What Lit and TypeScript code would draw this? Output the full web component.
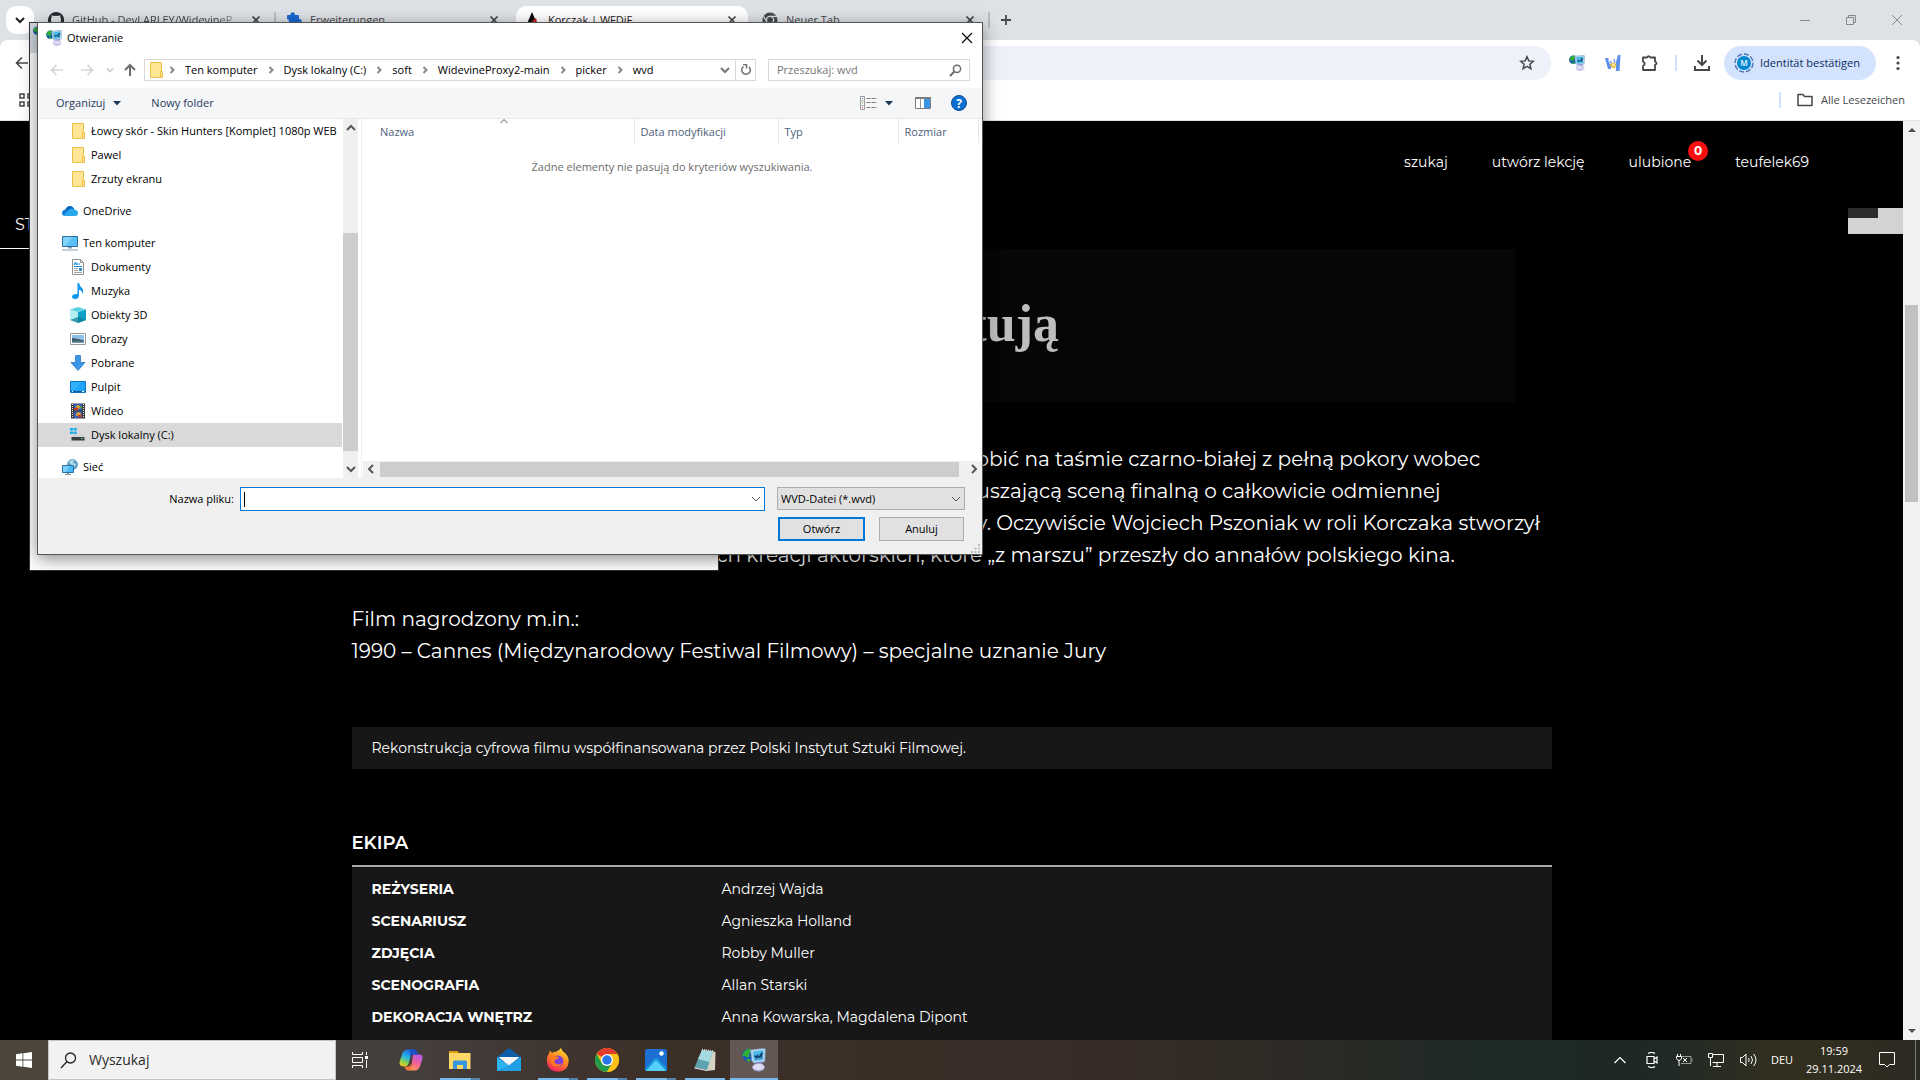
import { LitElement, html, css, nothing, TemplateResult } from "lit";
import { customElement } from "lit/decorators.js";
import { classMap } from "lit/directives/class-map.js";

/* ---------- shared icons ---------- */

const globeMonitor = (size: number) => html`
  <svg width=${size} height=${size} viewBox="0 0 24 24" aria-hidden="true">
    <circle cx="6.500" cy="7" r="6.300" fill="#1553b8" />
    <path d="M2 3.500Q5 .3 9 1L9.500 4 7 6 7.500 8.500 5 9.500 3 8 .5 8.500Q.4 5.500 2 3.500ZM4.500 10.500l3.500.5.5 2-2.500.4Q4.500 12.500 4.500 10.500Z" fill="#2fae3a" />
    <path d="M8.500 1.800 22.500.3 23.500 1.500 22.800 13.800 12 15.200 9.800 13Z" fill="#b4d3ea" stroke="#6f8fb2" stroke-width=".6" />
    <path d="M11 3.400 21.500 2.300 21 12 12 13Z" fill="#4cb8ea" />
    <path d="M12.500 7.500 14.500 10 15.500 7.500 17 9.500 20 4.500 19 10.500" fill="none" stroke="#123f6c" stroke-width="1.400" />
    <path d="M14 14.500 20.500 13.800 20 17.500H15Z" fill="#8486c8" />
    <ellipse cx="16.500" cy="19.200" rx="6" ry="3.800" fill="#dcdcf4" stroke="#9a9ac4" stroke-width=".6" />
    <path d="M12.500 21.500q4 2.500 8 0" stroke="#a9a6dc" fill="none" stroke-width="1.200" />
  </svg>`;

const folder = html`
  <svg width="16" height="16" viewBox="0 0 16 16" aria-hidden="true">
    <path d="M2.500.5h11v15h-11Z" fill="#ffe694" stroke="#e8c04a" />
    <path d="M12.500 9.500h2v6h-2Z" fill="#ffe694" stroke="#e8c04a" />
  </svg>`;

const chevronDown = (color: string, size = 10, width = 1) => html`
  <svg width=${size} height=${size} viewBox="0 0 10 10" aria-hidden="true">
    <path d="M1 3l4 4 4-4" fill="none" stroke=${color} stroke-width=${width} />
  </svg>`;

const treeIcons: Record<string, TemplateResult> = {
  folder,
  onedrive: html`<svg width="16" height="16" viewBox="0 0 16 16">
    <path d="M3 8Q4 3 8 3q3 0 4.500 3.500L8 11Z" fill="#0364b8" />
    <path d="M3.500 13Q0 13 0 10t3.500-3.500Q6 6.500 8 9l2 4Z" fill="#0f78d4" />
    <path d="M6 7.500Q9 4 12.500 6.500 16 7.500 16 10q0 3-3 3H3.500Q2 12.500 2 12Z" fill="#28a8ea" />
  </svg>`,
  computer: html`<svg width="16" height="16" viewBox="0 0 16 16">
    <path d="M.5 1.500h15v10H.5Z" fill="#5bc0f8" stroke="#2b6f9e" />
    <path d="M1 2h9L4 11H1Z" fill="#83d3fd" />
    <path d="M6 12h4v1.500H6ZM0 14.500h16v1H0Z" fill="#8aa0b2" />
  </svg>`,
  documents: html`<svg width="16" height="16" viewBox="0 0 16 16">
    <path d="M2.500.5h8l3 3v12h-11Z" fill="#fff" stroke="#8f8f8f" />
    <path d="M10.500.5v3h3" fill="none" stroke="#8f8f8f" />
    <path d="M4 6l1.500-3L7 6M4 7.500h8M4 5h6" stroke="#1b94dc" fill="none" />
    <path d="M4 9.500h4M4 11.500h4M4 13.500h8" stroke="#a0a0a0" />
    <path d="M9 9h3v3H9Z" fill="#3b8ec4" />
  </svg>`,
  music: html`<svg width="16" height="16" viewBox="0 0 16 16">
    <path d="M7.500 0H9q.5 3 3 5 2 2 .5 6-.3-3.500-3.500-4.500v6Q8.500 16 5 16q-3-.2-3-2.500Q2.500 10.500 7.500 11Z" fill="#0d96ee" />
  </svg>`,
  objects: html`<svg width="16" height="16" viewBox="0 0 16 16">
    <path d="M0 2.500 8 5v11l-8-3Z" fill="#b5eff2" />
    <path d="M16 2.500 8 5v11l8-3Z" fill="#0e9fc9" />
    <path d="M0 2.500 8 0l8 2.500L8 5Z" fill="#5ad2e2" />
    <path d="M0 13l8-3 8 3-8 3Z" fill="#0b7f96" opacity=".75" />
  </svg>`,
  pictures: html`<svg width="16" height="16" viewBox="0 0 16 16">
    <path d="M.5 2.500h15v11H.5Z" fill="#fff" stroke="#9a9a9a" />
    <path d="M2 4h12v8H2Z" fill="#8fc0ea" />
    <path d="M2 7q4 0 12 2.500V12H2Z" fill="#3b5f66" />
    <path d="M2 10.500h12V12H2Z" fill="#6f97b3" />
  </svg>`,
  downloads: html`<svg width="16" height="16" viewBox="0 0 16 16">
    <path d="M5.500.5h5v7h4.500l-7 8-7-8h4.500Z" fill="#3b95e6" stroke="#2a78c6" stroke-width=".8" />
  </svg>`,
  desktop: html`<svg width="16" height="16" viewBox="0 0 16 16">
    <path d="M.5 2.500h15v11H.5Z" fill="#1fa5fb" stroke="#1074bd" />
    <path d="M1 3h10L5 11H1Z" fill="#2fb0ff" />
    <path d="M1 12.500h14" stroke="#0a5c9c" /><path d="M2 12.500h1M12 12.500h2" stroke="#fff" />
  </svg>`,
  video: html`<svg width="16" height="16" viewBox="0 0 16 16">
    <path d="M1 .5h14v15H1Z" fill="#3a3a3a" />
    <path d="M2.500 1v14M13.500 1v14" stroke="#e8e8e8" stroke-dasharray="1 1" />
    <path d="M4 1h8v6.500H4ZM4 8.500h8V15H4Z" fill="#2f5fc0" />
    <path d="M5 3l4-1 2 3-3 1ZM5 12l3-3 3 1-1 4Z" fill="#e2a12a" />
    <path d="M4 5h4v2.500H4ZM8 12h4v2H8Z" fill="#c23a2a" />
    <path d="M9 4l3-1v3Z" fill="#5aa63a" />
  </svg>`,
  drive: html`<svg width="16" height="16" viewBox="0 0 16 16">
    <path d="M0 1h3v2.500H0ZM3.700 1h3v2.500h-3ZM0 4.500h3V7H0ZM3.700 4.500h3V7h-3Z" fill="#12aff0" />
    <path d="M3.500 7.500h9l2 2.500h-13Z" fill="#d2d2d2" />
    <path d="M1.500 10h13v3.500h-13Z" fill="#3a3f44" /><path d="M11 11.500h2" stroke="#3ade5c" />
  </svg>`,
  network: html`<svg width="16" height="16" viewBox="0 0 16 16">
    <circle cx="10.500" cy="5.500" r="5.400" fill="#5d9fc6" />
    <path d="M7 3q3-3 5-2l-1 3 3 1-2 4" fill="#b7dcec" />
    <path d="M.5 6.500h11v7H.5Z" fill="#4bb8f8" stroke="#2b6f9e" />
    <path d="M1 7h7l-4 6H1Z" fill="#7dd0fd" />
    <path d="M3 15.500h6M5 14.500h2" stroke="#8aa0b2" />
  </svg>`,
};

const reset = css`
  * { box-sizing: border-box; }
  button, input, select {
    font: inherit; color: inherit; margin: 0; padding: 0; border: 0;
    background: none; border-radius: 0; outline: 0; appearance: none;
  }
  a { color: inherit; text-decoration: none; }
  ul { list-style: none; margin: 0; padding: 0; }
  svg { display: block; flex: none; }
`;

/* ---------- browser chrome ---------- */

interface Tab { title: string; icon: TemplateResult; active?: boolean; sep?: boolean; }

const tabs: Tab[] = [
  {
    title: "GitHub - DevLARLEY/WidevineP",
    sep: true,
    icon: html`<svg width="16" height="16" viewBox="0 0 16 16"><path fill="#24292f" d="M8 0a8 8 0 0 0-2.500 15.600c.4.100.5-.2.5-.4v-1.400c-2.200.5-2.700-1-2.700-1-.4-1-.9-1.200-.9-1.200-.7-.5.100-.5.100-.5.800.100 1.200.800 1.200.800.700 1.200 1.900.900 2.300.700.100-.5.300-.9.500-1.100-1.800-.2-3.600-.9-3.600-4 0-.9.300-1.600.8-2.100-.1-.2-.4-1 .1-2.100 0 0 .7-.2 2.200.800a7.500 7.500 0 0 1 4 0c1.500-1 2.200-.8 2.200-.8.400 1.100.200 1.900.100 2.100.5.600.8 1.300.8 2.100 0 3.100-1.900 3.800-3.700 4 .3.300.6.800.6 1.500v2.200c0 .200.100.500.600.400A8 8 0 0 0 8 0Z"/></svg>`,
  },
  {
    title: "Erweiterungen",
    icon: html`<svg width="16" height="16" viewBox="0 0 16 16"><path fill="#1a67d2" d="M4.500 2.500a2.200 2.200 0 0 1 4.400 0V3H12q1 0 1 1v3h.5a2.200 2.200 0 0 1 0 4.400H13V14q0 1-1 1H9a2 2 0 0 0-4 0H2q-1 0-1-1v-3a2 2 0 0 0 0-4V4q0-1 1-1h2.500Z"/></svg>`,
  },
  {
    title: "Korczak | WFDiF",
    active: true,
    icon: html`<svg width="16" height="16" viewBox="0 0 16 16"><path d="M8 0l6 14H2Z" fill="#0b0b0b"/><path d="M8 9l4-3 2 8H9Z" fill="#c4211c"/></svg>`,
  },
  {
    title: "Neuer Tab",
    sep: true,
    icon: html`<svg width="16" height="16" viewBox="0 0 16 16"><circle cx="8" cy="8" r="7.500" fill="#45494e"/><path d="M8 4.300h7M4.800 9.900 1.500 4.200M11.200 9.900 7.800 15.500" stroke="#dee1e6" stroke-width="1.200"/><circle cx="8" cy="8" r="3.600" fill="#45494e" stroke="#dee1e6" stroke-width="1.400"/></svg>`,
  },
];

@customElement("browser-chrome")
class BrowserChrome extends LitElement {
  static styles = [reset, css`
    :host { display: block; font: 11px/16px "Segoe UI", "Open Sans", sans-serif; color: #1f2023; background: #dee1e6; white-space: nowrap; }
    .strip { height: 40px; display: flex; align-items: center; padding: 0 6px; }
    .search-tabs { width: 28px; height: 28px; border-radius: 10px; background: #fff; display: grid; place-items: center; margin-right: 6px; }
    .tabs { display: flex; align-self: stretch; padding-top: 6px; }
    .tab { width: 232px; margin-right: 6px; display: flex; align-items: center; gap: 8px; padding: 0 8px 6px; color: #45474a; border-radius: 10px 10px 0 0; position: relative; }
    .tab.active { background: #fff; color: #1f2023; }
    .tab.sep::after { content: ""; position: absolute; right: -4px; top: 6px; width: 2px; height: 16px; background: #b9bcc2; }
    .title { flex: 1; }
    .tab:first-child .title { mask-image: linear-gradient(90deg, #000 145px, transparent 172px); }
    .add { margin-left: 6px; }
    .window { margin-left: auto; display: flex; gap: 30px; padding-right: 9px; }
    .toolbar { background: #fff; border-radius: 8px 8px 0 0; height: 46px; display: flex; align-items: center; padding: 0 14px 0 14px; }
    .omnibox { flex: 1; margin-left: 86px; height: 34px; border-radius: 17px; background: #edf1fa; display: flex; align-items: center; padding-right: 16px; }
    .omnibox input { flex: 1; height: 100%; }
    .ext { display: flex; align-items: center; gap: 20px; margin-left: 18px; }
    .bar { width: 2px; height: 16px; background: #d3e3fd; }
    .ext .bar { margin: 0 -4px; }
    .identity { width: 152px; height: 34px; border-radius: 17px; background: #d3e3fd; color: #0a2a5e; display: flex; align-items: center; gap: 6px; padding: 0 12px 0 10px; margin: 0 14px 0 13px; }
    .bookmarks { background: #fff; height: 35px; border-bottom: 1px solid #e1e3e1; display: flex; align-items: center; padding: 0 15px 6px 18px; }
    .all { margin-left: auto; display: flex; align-items: center; gap: 8px; color: #45474a; }
    .all svg { margin-left: 8px; }
  `];

  render() {
    return html`
      <div class="strip">
        <button class="search-tabs" aria-label="Tabs durchsuchen">${chevronDown("#1f2023", 10, 2)}</button>
        <div class="tabs" role="tablist">
          ${tabs.map((t) => html`
            <div class=${classMap({ tab: true, active: !!t.active, sep: !!t.sep })} role="tab">
              ${t.icon}<span class="title">${t.title}</span>
              <button aria-label="Schließen">
                <svg width="16" height="16" viewBox="0 0 16 16"><path d="M4.500 4.500l7 7M11.500 4.500l-7 7" stroke="#3c3f43" stroke-width="1.600"/></svg>
              </button>
            </div>`)}
        </div>
        <button class="add" aria-label="Neuer Tab">
          <svg width="16" height="16" viewBox="0 0 16 16"><path d="M8 3v10M3 8h10" stroke="#45474a" stroke-width="1.800"/></svg>
        </button>
        <div class="window">
          <button aria-label="Minimieren"><svg width="16" height="16" viewBox="0 0 16 16"><path d="M3 8.500h10" stroke="#86898d"/></svg></button>
          <button aria-label="Verkleinern"><svg width="16" height="16" viewBox="0 0 16 16"><path d="M3.500 5.500h7v7h-7ZM5.500 5.500v-2h7v7h-2" fill="none" stroke="#86898d"/></svg></button>
          <button aria-label="Fenster schließen"><svg width="16" height="16" viewBox="0 0 16 16"><path d="M3 3l10 10M13 3L3 13" stroke="#86898d"/></svg></button>
        </div>
      </div>
      <div class="toolbar">
        <button aria-label="Zurück"><svg width="16" height="16" viewBox="0 0 16 16"><path d="M14 8H3M8 2.500 2.500 8 8 13.500" fill="none" stroke="#45474a" stroke-width="1.600"/></svg></button>
        <div class="omnibox">
          <input type="text" aria-label="Adresse" />
          <button aria-label="Lesezeichen"><svg width="16" height="16" viewBox="0 0 16 16"><path d="M8 1.800l1.800 4.100 4.500.4-3.400 3 1 4.400L8 11.400l-3.900 2.300 1-4.400-3.400-3 4.500-.4Z" fill="none" stroke="#45474a" stroke-width="1.500"/></svg></button>
        </div>
        <div class="ext">
          <button aria-label="WidevineProxy2">${globeMonitor(16)}</button>
          <button aria-label="Widevine"><svg width="16" height="16" viewBox="0 0 16 16"><path d="M0 3h3.500v3L6 11v3H3ZM15.500 0H13l-2 7v9h3.500Z" fill="#5b8fee"/><path d="M5 6l2 3M9 4l1 4" stroke="#7aa5f5" stroke-width="1.500"/><path d="M4.500 9.500 8 7.500 11.500 9l-1.500 4H7Z" fill="#f2bb44"/><circle cx="8.500" cy="10" r="1.200" fill="#fff3c4"/></svg></button>
          <button aria-label="Erweiterungen"><svg width="18" height="18" viewBox="0 0 18 18"><path d="M2 3.500h4q1.500-2.500 3.500 0H14v4q3 1.500 0 3.500V16H2v-4q3.500-2.200 0-4.500Z" fill="none" stroke="#45474a" stroke-width="1.800" stroke-linejoin="round"/></svg></button>
          <span class="bar"></span>
          <button aria-label="Downloads"><svg width="18" height="18" viewBox="0 0 18 18"><path d="M9 1v9M4.500 6.500 9 11l4.500-4.500M2 12v4h14v-4" fill="none" stroke="#45474a" stroke-width="2"/></svg></button>
        </div>
        <button class="identity">
          <svg width="20" height="20" viewBox="0 0 20 20"><circle cx="10" cy="10" r="9" fill="none" stroke="#4a74b4" stroke-width="1.400" stroke-dasharray="5 2"/><circle cx="10" cy="10" r="7" fill="#0288d1"/><text x="10" y="13" text-anchor="middle" font-size="8" font-weight="700" fill="#cfeafa" font-family="Open Sans, sans-serif">M</text></svg>
          Identität bestätigen
        </button>
        <button aria-label="Menü"><svg width="16" height="16" viewBox="0 0 16 16"><g fill="#45474a"><circle cx="8" cy="2.500" r="1.600"/><circle cx="8" cy="8" r="1.600"/><circle cx="8" cy="13.500" r="1.600"/></g></svg></button>
      </div>
      <div class="bookmarks">
        <button aria-label="Apps"><svg width="16" height="16" viewBox="0 0 16 16"><path d="M2 2h4v4H2ZM10 2h4v4h-4ZM2 10h4v4H2ZM10 10h4v4h-4Z" fill="none" stroke="#45474a" stroke-width="1.500"/></svg></button>
        <div class="all"><span class="bar"></span>
          <svg width="16" height="16" viewBox="0 0 16 16"><path d="M1 2.500h5l1.500 2H15v9H1Z" fill="none" stroke="#45474a" stroke-width="1.500" stroke-linejoin="round"/></svg>
          <a href="#">Alle Lesezeichen</a></div>
      </div>`;
  }
}

/* ---------- film page ---------- */

const crew = [
  ["REŻYSERIA", "Andrzej Wajda"],
  ["SCENARIUSZ", "Agnieszka Holland"],
  ["ZDJĘCIA", "Robby Muller"],
  ["SCENOGRAFIA", "Allan Starski"],
  ["DEKORACJA WNĘTRZ", "Anna Kowarska, Magdalena Dipont"],
];

@customElement("film-page")
class FilmPage extends LitElement {
  static styles = [reset, css`
    :host { display: flex; min-height: 0; overflow: hidden; background: #000; color: #fff; font: 14px/32px Montserrat, "Inter", sans-serif; white-space: nowrap; }
    .page { flex: 1; min-width: 0; overflow: hidden; }
    .nav { height: 82px; display: flex; justify-content: flex-end; align-items: center; gap: 44px; padding-right: 94px; }
    .fav { position: relative; }
    .badge { position: absolute; left: 100%; bottom: 17px; margin-left: -3px; width: 20px; height: 20px; border-radius: 50%; background: #f81010; font-weight: 700; font-size: 12px; line-height: 20px; text-align: center; }
    .sub { height: 46px; display: flex; justify-content: space-between; }
    .section { width: 352px; padding: 6px 0 0 15px; border-bottom: 1px solid #fff; font-size: 16px; }
    .widget { width: 55px; height: 26px; margin-top: 5px; background: #d3d3d3; }
    .widget i { display: block; width: 30px; height: 10px; background: #2c2c2c; }
    .content { max-width: 1200px; margin: 0 auto; }
    .still { width: 97%; height: 153px; background: #060606; color: #bdbdbd; display: flex; align-items: center; font: 700 52px/60px "Liberation Serif", serif; margin-bottom: 41px; }
    .still span { margin-left: 618px; padding-bottom: 4px; }
    .text { font-size: 20px; margin: 0 0 32px; }
    .text span { display: block; padding-left: 625px; }
    .text .long { padding-left: 365px; }
    .note { margin: 60px 0 62px; padding: 5px 20px; background: #171717; }
    h2 { font-size: 18px; line-height: 24px; font-weight: 600; margin: 0; padding-bottom: 10px; border-bottom: 2px solid #aaa; }
    .crew { background: #171717; padding: 6px 20px 32px; }
    table { border-collapse: collapse; width: 100%; }
    th, td { padding: 0; height: 32px; text-align: left; font-weight: 400; }
    th { width: 350px; font-weight: 700; }
    .scroll { width: 17px; background: #f1f1f1; display: flex; flex-direction: column; align-items: center; padding: 5px 0; }
    .thumb { width: 13px; height: 197px; margin: 171px 0 auto; background: #c1c1c1; }
  `];

  render() {
    return html`
      <main class="page">
        <nav class="nav">
          <a href="#">szukaj</a><a href="#">utwórz lekcję</a>
          <a class="fav" href="#">ulubione<span class="badge">0</span></a>
          <a href="#">teufelek69</a>
        </nav>
        <div class="sub"><div class="section">ST</div><div class="widget"><i></i></div></div>
        <div class="content">
          <div class="still"><span>tują</span></div>
          <p class="text">
            <span>obić na taśmie czarno-białej z pełną pokory wobec</span>
            <span>uszającą sceną finalną o całkowicie odmiennej</span>
            <span>y. Oczywiście Wojciech Pszoniak w roli Korczaka stworzył</span>
            <span class="long">ch kreacji aktorskich, które „z marszu” przeszły do annałów polskiego kina.</span>
          </p>
          <p class="text">Film nagrodzony m.in.:<br />1990 – Cannes (Międzynarodowy Festiwal Filmowy) – specjalne uznanie Jury</p>
          <div class="note">Rekonstrukcja cyfrowa filmu współfinansowana przez Polski Instytut Sztuki Filmowej.</div>
          <h2>EKIPA</h2>
          <div class="crew">
            <table>${crew.map(([role, name]) => html`<tr><th scope="row">${role}</th><td>${name}</td></tr>`)}</table>
          </div>
        </div>
      </main>
      <div class="scroll">
        <svg width="8" height="8" viewBox="0 0 8 8"><path d="M0 6l4-4 4 4Z" fill="#505050"/></svg>
        <div class="thumb"></div>
        <svg width="8" height="8" viewBox="0 0 8 8"><path d="M0 2l4 4 4-4Z" fill="#505050"/></svg>
      </div>`;
  }
}

/* ---------- file dialog ---------- */

interface Node { label: string; icon: string; child?: boolean; gap?: boolean; selected?: boolean; }

const tree: Node[] = [
  { label: "Łowcy skór - Skin Hunters [Komplet] 1080p WEB", icon: "folder", child: true },
  { label: "Pawel", icon: "folder", child: true },
  { label: "Zrzuty ekranu", icon: "folder", child: true },
  { label: "OneDrive", icon: "onedrive", gap: true },
  { label: "Ten komputer", icon: "computer", gap: true },
  { label: "Dokumenty", icon: "documents", child: true },
  { label: "Muzyka", icon: "music", child: true },
  { label: "Obiekty 3D", icon: "objects", child: true },
  { label: "Obrazy", icon: "pictures", child: true },
  { label: "Pobrane", icon: "downloads", child: true },
  { label: "Pulpit", icon: "desktop", child: true },
  { label: "Wideo", icon: "video", child: true },
  { label: "Dysk lokalny (C:)", icon: "drive", child: true, selected: true },
  { label: "Sieć", icon: "network", gap: true },
];

const crumbs = ["Ten komputer", "Dysk lokalny (C:)", "soft", "WidevineProxy2-main", "picker", "wvd"];

const arrow = (d: string, color = "#555") => html`
  <svg width="10" height="10" viewBox="0 0 10 10" aria-hidden="true"><path d=${d} fill="none" stroke=${color} stroke-width="2"/></svg>`;

@customElement("file-dialog")
class FileDialog extends LitElement {
  static styles = [reset, css`
    :host { display: flex; flex-direction: column; background: #fff; border: 1px solid #555; color: #000; font: 11px/16px "Segoe UI", "Open Sans", sans-serif; white-space: nowrap; box-shadow: 0 4px 16px rgba(0, 0, 0, .45); }
    .caption { display: flex; align-items: center; height: 30px; padding: 0 7px 1px 8px; gap: 5px; }
    .caption button { margin-left: auto; }
    .path { display: flex; align-items: center; height: 35px; padding: 0 12px 1px 11px; }
    .arrows { display: flex; align-items: center; gap: 14px; margin-right: 6px; }
    .arrows button { width: 16px; display: grid; place-items: center; }
    .arrows .recent { width: 5px; margin: 0 -3px; }
    .address { flex: 1; height: 22px; border: 1px solid #d9d9d9; display: flex; align-items: center; padding-left: 3px; }
    .address ol { list-style: none; margin: 0 auto 0 0; padding: 0; display: flex; }
    .address li { display: flex; align-items: center; }
    .address li svg { margin: 0 8px; }
    .address li:first-child svg { margin-left: 3px; }
    .address .open { width: 20px; display: grid; place-items: center; }
    .address .reload { width: 20px; height: 20px; border-left: 1px solid #d9d9d9; display: grid; place-items: center; }
    .find { width: 202px; height: 22px; margin-left: 12px; border: 1px solid #d9d9d9; display: flex; align-items: center; padding: 0 7px 0 8px; }
    .find input { flex: 1; min-width: 0; }
    .find input::placeholder { color: #767676; opacity: 1; }
    .tools { height: 31px; background: #f5f6f7; border-bottom: 1px solid #e7e8ea; display: flex; align-items: center; padding: 0 15px 0 18px; color: #1e395b; }
    .tools button { display: flex; align-items: center; gap: 8px; }
    .tools .new { margin-left: 30px; margin-right: auto; }
    .tools .view { margin-right: 22px; }
    .tools .preview { margin-right: 20px; }
    .body { flex: 1; min-height: 0; display: flex; }
    .tree { width: 304px; overflow: hidden; }
    .node { display: flex; align-items: center; height: 24px; gap: 5px; padding-left: 24px; width: 100%; }
    .node.child { padding-left: 32px; }
    .gap { margin-top: 8px; }
    .node.selected { background: #d9d9d9; }
    .vbar { width: 15px; margin-left: 1px; background: #f0f0f0; display: flex; flex-direction: column; align-items: center; padding: 4px 0; }
    .vthumb { width: 15px; height: 218px; margin: auto 0 13px; background: #cdcdcd; }
    .files { flex: 1; display: flex; flex-direction: column; margin-left: 3px; border-left: 1px solid #f0f0f0; position: relative; }
    .sort { position: absolute; left: 138px; top: -2px; }
    table { border-collapse: collapse; width: 616px; table-layout: fixed; color: #4c607a; }
    th { font-weight: 400; text-align: left; height: 24px; padding: 2px 0 0 6px; border-right: 1px solid #e5e5e5; }
    th:first-child { padding-left: 18px; width: 272px; }
    .c2 { width: 144px; } .c3 { width: 120px; } .c4 { width: 80px; }
    .empty { text-align: center; color: #6d6d6d; margin: 16px 0 auto; }
    .hbar { height: 17px; margin-left: 1px; background: #f0f0f0; display: flex; align-items: center; padding: 0 3px 1px; }
    .hthumb { flex: 1; height: 15px; margin: 0 10px 0 4px; background: #cdcdcd; }
    .footer { background: #f0f0f0; height: 76px; display: grid; grid-template-columns: 1fr 188px; column-gap: 12px; row-gap: 6px; align-content: start; padding: 9px 17px 0 129px; position: relative; }
    .name { display: flex; align-items: center; gap: 6px; }
    .name label { width: 67px; text-align: right; }
    .combo { flex: 1; height: 24px; background: #fff; border: 1px solid #0078d7; display: flex; align-items: center; padding-right: 3px; }
    .combo input { flex: 1; height: 22px; background: linear-gradient(#000, #000) 3px 4px / 1px 15px no-repeat; }
    .type { position: relative; }
    .type select { width: 100%; height: 23px; padding-left: 3px; background: #e1e1e1; border: 1px solid #adadad; }
    .type svg { position: absolute; right: 4px; top: 7px; pointer-events: none; }
    .buttons { grid-column: 2; display: flex; gap: 14px; padding: 0 1px; }
    .buttons button { flex: 1; height: 24px; background: #e1e1e1; border: 1px solid #adadad; }
    .buttons .ok { border: 2px solid #0078d7; }
    .grip { position: absolute; right: 2px; bottom: 1px; }
  `];

  render() {
    return html`
      <div class="caption">${globeMonitor(16)}<span>Otwieranie</span>
        <button aria-label="Zamknij"><svg width="16" height="16" viewBox="0 0 16 16"><path d="M3 3l10 10M13 3L3 13" stroke="#000" stroke-width="1.100"/></svg></button>
      </div>
      <div class="path">
        <div class="arrows">
          <button aria-label="Wstecz"><svg width="14" height="14" viewBox="0 0 14 14"><path d="M13 7H2M6.500 2 1.500 7l5 5" fill="none" stroke="#d4d4d4" stroke-width="1.500"/></svg></button>
          <button aria-label="Dalej"><svg width="14" height="14" viewBox="0 0 14 14"><path d="M1 7h11M7.500 2l5 5-5 5" fill="none" stroke="#d4d4d4" stroke-width="1.500"/></svg></button>
          <button class="recent" aria-label="Ostatnie">${chevronDown("#d0d0d0", 8, 2)}</button>
          <button aria-label="W górę"><svg width="14" height="14" viewBox="0 0 14 14"><path d="M7 13V2M2 7l5-5 5 5" fill="none" stroke="#6d6d6d" stroke-width="2"/></svg></button>
        </div>
        <div class="address">${folder}
          <ol>${crumbs.map((c) => html`<li>${arrow("M3.500 2 6.500 5 3.500 8", "#888")}<a href="#">${c}</a></li>`)}</ol>
          <button class="open" aria-label="Poprzednie lokalizacje">${chevronDown("#777", 10, 2)}</button>
          <button class="reload" aria-label="Odśwież"><svg width="12" height="12" viewBox="0 0 12 12"><path d="M9 2.800A4.300 4.300 0 1 1 3.500 2.500M3 .5h3.500V4.500" fill="none" stroke="#6d6d6d" stroke-width="1.500"/></svg></button>
        </div>
        <div class="find"><input type="text" aria-label="Przeszukaj" placeholder="Przeszukaj: wvd" />
          <svg width="13" height="13" viewBox="0 0 13 13"><circle cx="8" cy="4.800" r="3.600" fill="none" stroke="#6d6d6d" stroke-width="1.500"/><path d="M5.300 7.500 1 12" stroke="#6d6d6d" stroke-width="2"/></svg>
        </div>
      </div>
      <div class="tools">
        <button>Organizuj <svg width="8" height="5" viewBox="0 0 8 5"><path d="M0 0h8L4 4.500Z" fill="#1e395b"/></svg></button>
        <button class="new">Nowy folder</button>
        <button class="view" aria-label="Widok">
          <svg width="17" height="14" viewBox="0 0 17 14"><path d="M.5.5h4v13h-4Z" fill="#fff" stroke="#9a9a9a"/><path d="M.5 5h4M.5 9.500h4" stroke="#b0b0b0"/><path d="M2 2.500h1" stroke="#3a62c4"/><path d="M2 7h1" stroke="#2a9a4a"/><path d="M2 11.500h1" stroke="#c43a2a"/><path d="M6.500 2.500H17M6.500 6.500H17M6.500 11.500H17" stroke="#7a7a7a" stroke-dasharray="4 1"/></svg>
          <svg width="8" height="5" viewBox="0 0 8 5"><path d="M0 0h8L4 4.500Z" fill="#1e395b"/></svg>
        </button>
        <button class="preview" aria-label="Okienko podglądu"><svg width="16" height="12" viewBox="0 0 16 12"><path d="M.5.5h15v11H.5Z" fill="#fff" stroke="#7d7d7d"/><path d="M0 1h16" stroke="#7d7d7d" stroke-width="2"/><path d="M5.500 2v9" stroke="#9a9a9a"/><path d="M9 2h6v9H9Z" fill="#3a96e4"/></svg></button>
        <button aria-label="Pomoc"><svg width="16" height="16" viewBox="0 0 16 16"><circle cx="8" cy="8" r="7.500" fill="#0a6fd0" stroke="#0a4c92"/><text x="8" y="12.500" text-anchor="middle" font-size="12" font-weight="700" fill="#fff" font-family="Open Sans, sans-serif">?</text></svg></button>
      </div>
      <div class="body">
        <ul class="tree">
          ${tree.map((n) => html`<li class=${n.gap ? "gap" : nothing}>
            <button class=${classMap({ node: true, child: !!n.child, selected: !!n.selected })}>${treeIcons[n.icon]}<span>${n.label}</span></button></li>`)}
        </ul>
        <div class="vbar">${arrow("M1 7l4-4 4 4")}<div class="vthumb"></div>${arrow("M1 3l4 4 4-4")}</div>
        <div class="files">
          <svg class="sort" width="8" height="8" viewBox="0 0 8 8"><path d="M.5 6 4 2.500 7.500 6" fill="none" stroke="#555"/></svg>
          <table><thead><tr><th scope="col">Nazwa</th><th class="c2" scope="col">Data modyfikacji</th><th class="c3" scope="col">Typ</th><th class="c4" scope="col">Rozmiar</th></tr></thead></table>
          <p class="empty">Żadne elementy nie pasują do kryteriów wyszukiwania.</p>
          <div class="hbar">${arrow("M7 1 3 5l4 4")}<div class="hthumb"></div>${arrow("M3 1l4 4-4 4")}</div>
        </div>
      </div>
      <div class="footer">
        <div class="name"><label for="file">Nazwa pliku:</label>
          <div class="combo"><input id="file" type="text" /><button aria-label="Historia">${chevronDown("#555")}</button></div></div>
        <div class="type"><select aria-label="Typ pliku"><option>WVD-Datei (*.wvd)</option></select>${chevronDown("#555")}</div>
        <div class="buttons"><button class="ok">Otwórz</button><button>Anuluj</button></div>
        <svg class="grip" width="9" height="9" viewBox="0 0 9 9"><path d="M7 0h2v2H7ZM7 3.500h2v2H7ZM3.500 3.500h2v2h-2ZM7 7h2v2H7ZM3.500 7h2v2h-2ZM0 7h2v2H0Z" fill="#bcbcbc"/></svg>
      </div>`;
  }
}

/* ---------- taskbar ---------- */

interface App { name: string; icon: TemplateResult; state?: "many" | "one" | "active"; }

const apps: App[] = [
  { name: "Copilot", icon: html`<svg width="24" height="24" viewBox="0 0 24 24">
      <defs>
        <linearGradient id="ca" x1=".6" y1="0" x2=".2" y2="1"><stop offset="0" stop-color="#1e63e0"/><stop offset=".45" stop-color="#25b6e6"/><stop offset=".75" stop-color="#8fd14a"/><stop offset="1" stop-color="#f5c52c"/></linearGradient>
        <linearGradient id="cb" x1=".7" y1="0" x2=".3" y2="1"><stop offset="0" stop-color="#b45be8"/><stop offset=".5" stop-color="#f0609c"/><stop offset="1" stop-color="#ff9a4a"/></linearGradient>
      </defs>
      <path d="M14 6.500h6q4 0 3.500 4L21.500 17q-1.500 5.500-6 5.500H8.500q3-.5 4-4.500Z" fill="url(#cb)"/>
      <path d="M9 1.500h7.500q-3 .5-4.500 5L9.500 16q-1 2.500-4 2.500Q0 18.500.5 14L3 6.500Q4.500 1.500 9 1.500Z" fill="url(#ca)"/>
      <path d="M11 1.500h4.500q2.500 0 3.200 5H14q-1.500 0-2.500 2Z" fill="#1c4fc4"/>
      <path d="M5.500 18.500h3.500q2 0 3-3l.5 3q-1 4-3.500 4-2.500 0-3.500-4Z" fill="#f0733a"/>
    </svg>` },
  { name: "Eksplorator", state: "many", icon: html`<svg width="24" height="24" viewBox="0 0 24 24">
      <path d="M1 3h8.500l2 2.500H1Z" fill="#e0a010"/><path d="M1 5h21.500v16H1Z" fill="#ffd866"/>
      <path d="M5 21v-7q0-1.500 1.500-1.500h11Q19 12.500 19 14v7h-4v-4H9v4Z" fill="#3a96dc"/></svg>` },
  { name: "Poczta", icon: html`<svg width="24" height="24" viewBox="0 0 24 24">
      <path d="M0 9 12 0l12 9v3H0Z" fill="#0f5ea8"/><path d="M1.500 9h21L12 18Z" fill="#f4f8fc"/>
      <path d="M0 9l12 8.500L24 9v14H0Z" fill="#2bb3f2"/><path d="M24 9v14H0l12-6Z" fill="#1a92e0" opacity=".6"/></svg>` },
  { name: "Firefox", state: "many", icon: html`<svg width="24" height="24" viewBox="0 0 24 24">
      <defs><linearGradient id="ff" x1=".8" y1="0" x2=".3" y2="1"><stop offset="0" stop-color="#ffe83a"/><stop offset=".45" stop-color="#ff8a1e"/><stop offset="1" stop-color="#f5205e"/></linearGradient></defs>
      <path d="M15 0q1 3.500 4 5 4 4 3.700 8.500Q22 23.500 12 23.800 1 23 .8 12.500.8 8 3 5.500l1-3 2 2.500q2-1.500 4-1.200Q13 3 15 0Z" fill="url(#ff)"/>
      <circle cx="12" cy="13" r="5.400" fill="#7b3fd8"/>
      <path d="M4 7.500q4-.5 6 1l3 .500q-.5 2-3.500 2.500-2 2 0 4 3 2 6-.5-1 4-5.500 3.500-5-.5-6-6Z" fill="#ff7a1e"/></svg>` },
  { name: "Chrome", state: "many", icon: html`<svg width="24" height="24" viewBox="0 0 24 24">
      <circle cx="12" cy="12" r="12" fill="#fbc116"/>
      <path d="M12 12 1.600 6A12 12 0 0 1 22.400 6Z" fill="#e33b2e"/><path d="M1.600 6A12 12 0 0 0 12 24l5.200-9H6.800Z" fill="#229a49"/>
      <path d="M12 6h10.400a12 12 0 0 1 0 12A12 12 0 0 1 12 24l5.200-9Z" fill="#fbc116"/>
      <circle cx="12" cy="12" r="6" fill="#fff"/><circle cx="12" cy="12" r="4.700" fill="#2a75e8"/></svg>` },
  { name: "Zdjęcia", state: "many", icon: html`<svg width="24" height="24" viewBox="0 0 24 24">
      <rect x="1" y="1" width="22" height="22" rx="2" fill="#1c6fd0"/>
      <path d="M1 21 10 11q2-2 4 0l9 9v1q0 2-2 2H3q-2 0-2-2Z" fill="#1598e0"/>
      <path d="M2 23 10.500 13.500q1.500-1.500 3 0L22 23Z" fill="#56d0fa"/><circle cx="17.500" cy="5.500" r="2.200" fill="#fff"/></svg>` },
  { name: "Notatnik", state: "one", icon: html`<svg width="24" height="24" viewBox="0 0 24 24">
      <path d="M19 3 22.500 4 22 22 13 23Z" fill="#d8d4c4"/><path d="M9 2 20 3.500 14 22 1.500 19.500Z" fill="#5fa3b0"/>
      <path d="M9 2 20 3.500 16.500 14 5 11Z" fill="#a5dbe0"/><path d="M1.500 19.500 14 22v1L1.500 20.500Z" fill="#f2f2f2"/>
      <path d="M9 1.500 20 3" stroke="#e8e8e8" stroke-width="1.500" stroke-dasharray="1 1"/></svg>` },
  { name: "Otwieranie", state: "active", icon: globeMonitor(24) },
];

@customElement("task-bar")
class TaskBar extends LitElement {
  static styles = [reset, css`
    :host { display: flex; align-items: stretch; height: 40px; color: #fff; font: 11px/16px "Segoe UI", "Open Sans", sans-serif; white-space: nowrap;
      background: linear-gradient(90deg, #4c453a 0, #454040 12%, #443e3c 22%, #3c2f28 34%, #3a2c26 55%, #2c2a25 68%, #1d2a26 78%, #1e2826 86%, #33301f 93%, #2b2a22 100%); }
    .start { width: 48px; display: grid; place-items: center; }
    .search { width: 288px; background: #f2f2f2; border: 1px solid #c4c4c4; display: flex; align-items: center; gap: 12px; padding-left: 11px; }
    .search input { flex: 1; min-width: 0; height: 24px; line-height: 24px; font-size: 14px; color: #2b2b2b; }
    .search input::placeholder { color: #2b2b2b; opacity: 1; }
    .view { width: 48px; display: grid; place-items: center; margin-right: 3px; }
    .apps { display: flex; gap: 1px; margin-right: auto; }
    .app { width: 48px; display: grid; place-items: center; position: relative; }
    .app.on::after { content: ""; position: absolute; left: 4px; right: 4px; bottom: 0; height: 2px; background: #76b9ed; }
    .app.many::after { background: linear-gradient(90deg, #76b9ed 31px, #3f5e78 31px, #5584aa 32px); }
    .app.active { background: rgba(255, 255, 255, .2); }
    .app.active::after { left: 0; right: 0; }
    .tray { display: flex; align-items: center; gap: 14px; }
    .tray button { display: grid; place-items: center; width: 18px; }
    .tray .lang { width: 22px; }
    .clock { width: 58px; text-align: center; line-height: 18px; margin-left: -2px; }
    .tray .notify { width: 16px; margin-left: 2px; }
    .show { width: 5px; border-left: 1px solid #7c7c74; align-self: stretch; margin-left: 6px; }
  `];

  render() {
    return html`
      <button class="start" aria-label="Start"><svg width="16" height="16" viewBox="0 0 16 16"><path d="M0 2.200 6.500 1.300v6.200H0ZM7.300 1.200 16 0v7.500H7.300ZM0 8.400h6.500v6.300L0 13.800ZM7.300 8.400H16V16l-8.700-1.200Z" fill="#fff"/></svg></button>
      <label class="search">
        <svg width="17" height="17" viewBox="0 0 17 17"><circle cx="10.500" cy="6" r="5" fill="none" stroke="#222" stroke-width="1.300"/><path d="M7 9.500 1 16" stroke="#222" stroke-width="1.300"/></svg>
        <input type="text" placeholder="Wyszukaj" aria-label="Wyszukaj" />
      </label>
      <button class="view" aria-label="Widok zadań"><svg width="16" height="16" viewBox="0 0 16 16"><path d="M.5 0v2.500h10V0M.5 16v-2.500h10V16M.5 5.500h10v5H.5ZM14.500 0v3M14.500 8v8" fill="none" stroke="#fff"/><path d="M13 4h3v3h-3Z" fill="#fff"/></svg></button>
      <div class="apps">
        ${apps.map((a) => html`<button aria-label=${a.name} class=${classMap({ app: true, on: !!a.state, many: a.state === "many", active: a.state === "active" })}>${a.icon}</button>`)}
      </div>
      <div class="tray">
        <button aria-label="Ukryte ikony"><svg width="12" height="8" viewBox="0 0 12 8"><path d="M.5 7 6 1.500 11.500 7" fill="none" stroke="#fff" stroke-width="1.200"/></svg></button>
        <button aria-label="Kamera"><svg width="12" height="16" viewBox="0 0 12 16"><path d="M1 4.500h7v7H1ZM8 7l3-2v6L8 9M2 1.500q4-2 7 0M2 14.500q4 2 7 0" fill="none" stroke="#fff" stroke-width="1.200"/></svg></button>
        <button aria-label="Zasilanie"><svg width="17" height="12" viewBox="0 0 17 12"><path d="M5 2.500h10v7H5M16 4.500v3" fill="none" stroke="#9a9a98"/><path d="M1.500 0v2M4.500 0v2M.5 2.500h5v2q-1 2-2.500 2T.5 4.500ZM3 6.500V12M7 4l4 4M11 4 7 8" fill="none" stroke="#fff"/></svg></button>
        <button aria-label="Sieć"><svg width="16" height="14" viewBox="0 0 16 14"><path d="M5 1.500h10.500v8H4.500M9 10v3M5 13.500h8M.5.5h4v4h-4ZM2.500 5v8" fill="none" stroke="#fff"/></svg></button>
        <button aria-label="Głośność"><svg width="17" height="14" viewBox="0 0 17 14"><path d="M.5 4.500h2L6 1v12L2.500 9.500h-2ZM8.500 5q1.500 2 0 4M11 3q3 4 0 8M13.500 1q5 6 0 12" fill="none" stroke="#fff"/></svg></button>
        <button class="lang">DEU</button>
        <div class="clock">19:59<br />29.11.2024</div>
        <button class="notify" aria-label="Powiadomienia"><svg width="16" height="16" viewBox="0 0 16 16"><path d="M.5.5h15v12h-5L8 15l-2.500-2.500h-5Z" fill="none" stroke="#fff"/></svg></button>
        <div class="show"></div>
      </div>`;
  }
}

/* ---------- desktop ---------- */

@customElement("app-root")
class AppRoot extends LitElement {
  static styles = [reset, css`
    :host { display: flex; flex-direction: column; height: 100vh; position: relative; overflow: hidden; }
    film-page { flex: 1; }
    .picker { position: absolute; left: 29px; top: 22px; width: 690px; height: 549px; background: #fff; border: 1px solid #333; }
    .picker-caption { height: 30px; background: #d5dbe3; padding: 3px 0 0 3px; }
    file-dialog { position: absolute; left: 37px; top: 22px; width: 946px; height: 533px; }
  `];

  render() {
    return html`
      <browser-chrome></browser-chrome>
      <film-page></film-page>
      <task-bar></task-bar>
      <div class="picker"><div class="picker-caption">${globeMonitor(16)}</div></div>
      <file-dialog></file-dialog>`;
  }
}
